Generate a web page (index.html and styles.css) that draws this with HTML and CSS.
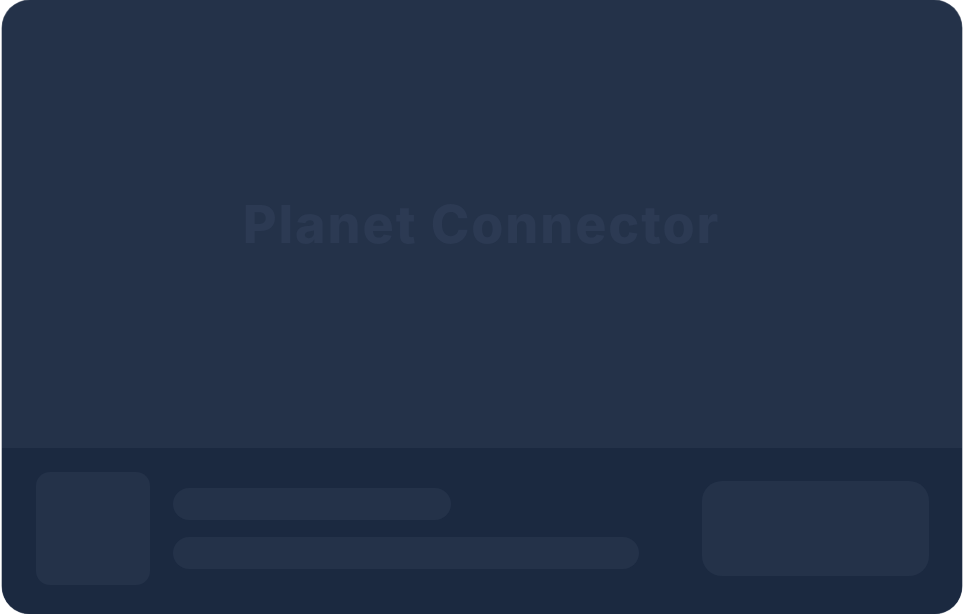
FILE: index.html
```html
<!DOCTYPE html>
<html lang="en">
<head>
<meta charset="utf-8">
<title>Planet Connector</title>
<link rel="stylesheet" href="styles.css">
</head>
<body>
  <div class="card">
    <div class="hero">
      <h1 class="title">Planet Connector</h1>
    </div>
    <div class="footer">
      <div class="thumb"></div>
      <div class="lines">
        <div class="line line-short"></div>
        <div class="line line-long"></div>
      </div>
      <div class="action"></div>
    </div>
  </div>
</body>
</html>
```
FILE: styles.css
```css
html, body {
  margin: 0;
  padding: 0;
  background: #ffffff;
}

.card {
  width: 960px;
  height: 614px;
  margin: 0 auto;
  border-radius: 28px;
  overflow: hidden;
  background: #243249;
  display: flex;
  flex-direction: column;
  box-shadow: 0 0 0 0.5px rgba(30, 43, 66, 0.6);
}

.hero {
  flex: 1;
  display: flex;
  align-items: center;
  justify-content: center;
}

.title {
  margin: 0;
  font-family: Inter, "Noto Sans", sans-serif;
  font-weight: 800;
  font-size: 52px;
  letter-spacing: 1.9px;
  color: #2c3a53;
  padding-top: 0;
}

.footer {
  height: 166px;
  background: #1b2940;
  display: flex;
  align-items: center;
  padding: 0 33px 5px 34px;
  box-sizing: border-box;
}

.thumb {
  width: 114px;
  height: 113px;
  border-radius: 14px;
  background: #243249;
  flex: none;
}

.lines {
  display: flex;
  flex-direction: column;
  gap: 17px;
  margin-left: 23px;
}

.line {
  height: 32px;
  border-radius: 16px;
  background: #243249;
}

.line-short { width: 278px; }
.line-long { width: 466px; }

.action {
  margin-left: auto;
  width: 227px;
  height: 95px;
  border-radius: 20px;
  background: #243249;
}
```
